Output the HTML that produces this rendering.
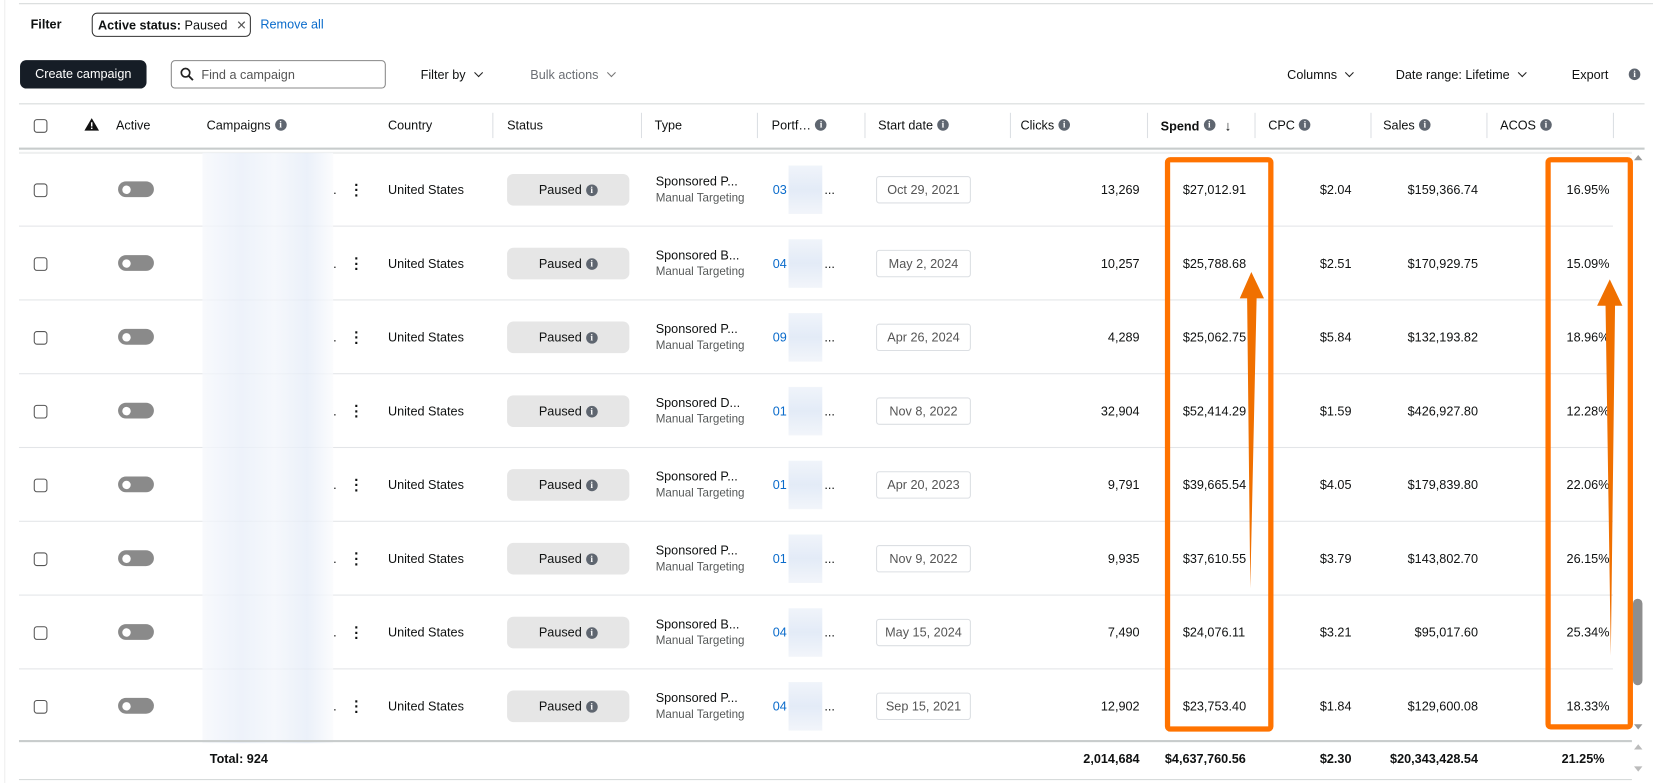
<!DOCTYPE html>
<html><head><meta charset="utf-8"><style>
*{box-sizing:border-box;margin:0;padding:0}
html,body{width:1653px;height:783px;overflow:hidden;background:#fff}
#w{position:absolute;left:0;top:0;width:1568px;height:743px;transform:scale(1.0542);transform-origin:0 0;font-family:"Liberation Sans",sans-serif;font-size:12px;color:#0f1111}
.a{position:absolute;white-space:nowrap}
.i{display:inline-block;width:11px;height:11px;border-radius:50%;background:#5f6670;color:#fff;font-size:9px;font-weight:bold;line-height:11px;text-align:center;vertical-align:top;margin-top:1px;margin-left:4px;font-family:"Liberation Serif",serif}
.cb{position:absolute;width:13px;height:13px;border:1.3px solid #555;border-radius:3px;background:#fff}
.row{position:absolute;left:18px;width:1512px;height:70px;border-bottom:1px solid #e3e5e8}
.row .a{top:28px}
.tg{position:absolute;left:94px;top:27px;width:34px;height:15px;border-radius:8px;background:#8a8a8a}
.tg:after{content:"";position:absolute;left:4px;top:3.5px;width:8px;height:8px;border-radius:50%;background:#fff}
.bl{position:absolute;left:174px;top:0;width:124px;height:70px;background:linear-gradient(90deg,#f6f8fc 0,#e9eff9 30%,#f3f6fb 55%,#e6edf8 80%,#fafbfd 100%);opacity:.8}
.bl2{position:absolute;left:730px;top:12px;width:32px;height:46px;background:linear-gradient(180deg,#f0f4fa,#e3ebf7 50%,#f2f5fa)}
.kb{position:absolute;left:318px;top:28px;width:4px;font-size:14px;font-weight:bold;line-height:5px;text-align:center}
.pill{position:absolute;left:463px;top:20px;width:116px;height:30px;border-radius:6px;background:#e6e6e6;text-align:center;line-height:30px}
.dt{position:absolute;left:813px;top:22px;width:90px;height:26px;border:1px solid #dcdfe3;border-radius:3px;text-align:center;line-height:24px;color:#555}
.ty{position:absolute;left:604px;top:20px;line-height:15px}
.ty small{font-size:11px;color:#565959}
.r{text-align:right}
.hd{position:absolute;top:112px;font-size:12px}
.dv{position:absolute;top:107px;width:1px;height:24px;background:#dcdfe3}
.ch{display:inline-block;width:6px;height:6px;border-right:1.6px solid #222;border-bottom:1.6px solid #222;transform:rotate(45deg);margin-left:9px;vertical-align:3px}
.ob{position:absolute;border:5px solid #ff7300;border-radius:5px}
</style></head><body><div id="w">
<div class="a" style="left:18px;top:3px;width:1550px;height:1px;background:#d5d9d9"></div>
<div class="a" style="left:4px;top:0;width:1px;height:743px;background:#eee"></div>
<div class="a" style="left:29px;top:16px;font-weight:bold">Filter</div>
<div class="a" style="left:87px;top:12px;width:151px;height:23px;border:1px solid #333;border-radius:5px;padding:4px 5px"><b>Active status:</b> Paused <span style="margin-left:5px;color:#555">✕</span></div>
<div class="a" style="left:247px;top:16px;color:#0a6bcb">Remove all</div>
<div class="a" style="left:19px;top:57px;width:120px;height:27px;background:#161d26;border-radius:6px;color:#fff;text-align:center;line-height:27px">Create campaign</div>
<div class="a" style="left:162px;top:57px;width:204px;height:27px;border:1px solid #888;border-radius:4px;padding:6px 0 0 28px;color:#555">Find a campaign</div>
<svg class="a" style="left:171px;top:64px" width="13" height="13"><circle cx="5" cy="5" r="4" fill="none" stroke="#222" stroke-width="1.6"/><line x1="8" y1="8" x2="12" y2="12" stroke="#222" stroke-width="1.8"/></svg>
<div class="a" style="left:399px;top:64px">Filter by<span class="ch"></span></div>
<div class="a" style="left:503px;top:64px;color:#6b6f75">Bulk actions<span class="ch" style="border-color:#777"></span></div>
<div class="a" style="left:1221px;top:64px">Columns<span class="ch"></span></div>
<div class="a" style="left:1324px;top:64px">Date range: Lifetime<span class="ch"></span></div>
<div class="a" style="left:1491px;top:64px">Export</div>
<div class="a" style="left:1541px;top:64px"><span class="i">i</span></div>
<div class="a" style="left:18px;top:98px;width:1542px;height:1px;background:#d5d9d9"></div>
<div class="cb" style="left:32px;top:113px"></div>
<svg class="a" style="left:80px;top:112px" width="14" height="12"><path d="M7 0L14 12H0Z" fill="#111"/><rect x="6.3" y="4" width="1.4" height="4" fill="#fff"/><rect x="6.3" y="9" width="1.4" height="1.4" fill="#fff"/></svg>
<div class="hd" style="left:110px">Active</div>
<div class="hd" style="left:196px">Campaigns<span class="i">i</span></div>
<div class="hd" style="left:368px">Country</div>
<div class="dv" style="left:467px"></div><div class="hd" style="left:481px">Status</div>
<div class="dv" style="left:608px"></div><div class="hd" style="left:621px">Type</div>
<div class="dv" style="left:718px"></div><div class="hd" style="left:732px">Portf…<span class="i">i</span></div>
<div class="dv" style="left:820px"></div><div class="hd" style="left:833px">Start date<span class="i">i</span></div>
<div class="dv" style="left:958px"></div><div class="hd" style="left:968px">Clicks<span class="i">i</span></div>
<div class="dv" style="left:1088px"></div><div class="hd" style="left:1101px;font-weight:bold">Spend<span class="i">i</span><span style="margin-left:9px;font-size:13px">↓</span></div>
<div class="dv" style="left:1190px"></div><div class="hd" style="left:1203px">CPC<span class="i">i</span></div>
<div class="dv" style="left:1300px"></div><div class="hd" style="left:1312px">Sales<span class="i">i</span></div>
<div class="dv" style="left:1410px"></div><div class="hd" style="left:1423px">ACOS<span class="i">i</span></div>
<div class="dv" style="left:1530px"></div>
<div class="a" style="left:18px;top:140px;width:1542px;height:1.5px;background:#c8cccc"></div>
<div class="a" style="left:18px;top:144px;width:1530px;height:2px;background:#eef0f0"></div>

<div class="row" style="top:145px"><div class="cb" style="left:14px;top:29px"></div><div class="tg"></div><div class="bl"></div><div class="a" style="left:298px">.</div><div class="kb">·<br>·<br>·</div><div class="a" style="left:350px">United States</div><div class="pill">Paused<span class="i" style="margin-top:10px">i</span></div><div class="ty">Sponsored P...<br><small>Manual Targeting</small></div><div class="a" style="left:715px;color:#0a6bcb">03</div><div class="bl2"></div><div class="a" style="left:764px">...</div><div class="dt">Oct 29, 2021</div><div class="a r" style="right:449px">13,269</div><div class="a" style="left:1104px">$27,012.91</div><div class="a r" style="right:248px">$2.04</div><div class="a r" style="right:128px">$159,366.74</div><div class="a" style="left:1468px">16.95%</div></div>
<div class="row" style="top:215px"><div class="cb" style="left:14px;top:29px"></div><div class="tg"></div><div class="bl"></div><div class="a" style="left:298px">.</div><div class="kb">·<br>·<br>·</div><div class="a" style="left:350px">United States</div><div class="pill">Paused<span class="i" style="margin-top:10px">i</span></div><div class="ty">Sponsored B...<br><small>Manual Targeting</small></div><div class="a" style="left:715px;color:#0a6bcb">04</div><div class="bl2"></div><div class="a" style="left:764px">...</div><div class="dt">May 2, 2024</div><div class="a r" style="right:449px">10,257</div><div class="a" style="left:1104px">$25,788.68</div><div class="a r" style="right:248px">$2.51</div><div class="a r" style="right:128px">$170,929.75</div><div class="a" style="left:1468px">15.09%</div></div>
<div class="row" style="top:285px"><div class="cb" style="left:14px;top:29px"></div><div class="tg"></div><div class="bl"></div><div class="a" style="left:298px">.</div><div class="kb">·<br>·<br>·</div><div class="a" style="left:350px">United States</div><div class="pill">Paused<span class="i" style="margin-top:10px">i</span></div><div class="ty">Sponsored P...<br><small>Manual Targeting</small></div><div class="a" style="left:715px;color:#0a6bcb">09</div><div class="bl2"></div><div class="a" style="left:764px">...</div><div class="dt">Apr 26, 2024</div><div class="a r" style="right:449px">4,289</div><div class="a" style="left:1104px">$25,062.75</div><div class="a r" style="right:248px">$5.84</div><div class="a r" style="right:128px">$132,193.82</div><div class="a" style="left:1468px">18.96%</div></div>
<div class="row" style="top:355px"><div class="cb" style="left:14px;top:29px"></div><div class="tg"></div><div class="bl"></div><div class="a" style="left:298px">.</div><div class="kb">·<br>·<br>·</div><div class="a" style="left:350px">United States</div><div class="pill">Paused<span class="i" style="margin-top:10px">i</span></div><div class="ty">Sponsored D...<br><small>Manual Targeting</small></div><div class="a" style="left:715px;color:#0a6bcb">01</div><div class="bl2"></div><div class="a" style="left:764px">...</div><div class="dt">Nov 8, 2022</div><div class="a r" style="right:449px">32,904</div><div class="a" style="left:1104px">$52,414.29</div><div class="a r" style="right:248px">$1.59</div><div class="a r" style="right:128px">$426,927.80</div><div class="a" style="left:1468px">12.28%</div></div>
<div class="row" style="top:425px"><div class="cb" style="left:14px;top:29px"></div><div class="tg"></div><div class="bl"></div><div class="a" style="left:298px">.</div><div class="kb">·<br>·<br>·</div><div class="a" style="left:350px">United States</div><div class="pill">Paused<span class="i" style="margin-top:10px">i</span></div><div class="ty">Sponsored P...<br><small>Manual Targeting</small></div><div class="a" style="left:715px;color:#0a6bcb">01</div><div class="bl2"></div><div class="a" style="left:764px">...</div><div class="dt">Apr 20, 2023</div><div class="a r" style="right:449px">9,791</div><div class="a" style="left:1104px">$39,665.54</div><div class="a r" style="right:248px">$4.05</div><div class="a r" style="right:128px">$179,839.80</div><div class="a" style="left:1468px">22.06%</div></div>
<div class="row" style="top:495px"><div class="cb" style="left:14px;top:29px"></div><div class="tg"></div><div class="bl"></div><div class="a" style="left:298px">.</div><div class="kb">·<br>·<br>·</div><div class="a" style="left:350px">United States</div><div class="pill">Paused<span class="i" style="margin-top:10px">i</span></div><div class="ty">Sponsored P...<br><small>Manual Targeting</small></div><div class="a" style="left:715px;color:#0a6bcb">01</div><div class="bl2"></div><div class="a" style="left:764px">...</div><div class="dt">Nov 9, 2022</div><div class="a r" style="right:449px">9,935</div><div class="a" style="left:1104px">$37,610.55</div><div class="a r" style="right:248px">$3.79</div><div class="a r" style="right:128px">$143,802.70</div><div class="a" style="left:1468px">26.15%</div></div>
<div class="row" style="top:565px"><div class="cb" style="left:14px;top:29px"></div><div class="tg"></div><div class="bl"></div><div class="a" style="left:298px">.</div><div class="kb">·<br>·<br>·</div><div class="a" style="left:350px">United States</div><div class="pill">Paused<span class="i" style="margin-top:10px">i</span></div><div class="ty">Sponsored B...<br><small>Manual Targeting</small></div><div class="a" style="left:715px;color:#0a6bcb">04</div><div class="bl2"></div><div class="a" style="left:764px">...</div><div class="dt">May 15, 2024</div><div class="a r" style="right:449px">7,490</div><div class="a" style="left:1104px">$24,076.11</div><div class="a r" style="right:248px">$3.21</div><div class="a r" style="right:128px">$95,017.60</div><div class="a" style="left:1468px">25.34%</div></div>
<div class="row" style="top:635px;border-bottom:none"><div class="cb" style="left:14px;top:29px"></div><div class="tg"></div><div class="bl"></div><div class="a" style="left:298px">.</div><div class="kb">·<br>·<br>·</div><div class="a" style="left:350px">United States</div><div class="pill">Paused<span class="i" style="margin-top:10px">i</span></div><div class="ty">Sponsored P...<br><small>Manual Targeting</small></div><div class="a" style="left:715px;color:#0a6bcb">04</div><div class="bl2"></div><div class="a" style="left:764px">...</div><div class="dt">Sep 15, 2021</div><div class="a r" style="right:449px">12,902</div><div class="a" style="left:1104px">$23,753.40</div><div class="a r" style="right:248px">$1.84</div><div class="a r" style="right:128px">$129,600.08</div><div class="a" style="left:1468px">18.33%</div></div>

<div class="a" style="left:18px;top:702px;width:1530px;height:1.5px;background:#c8cccc"></div>
<div class="a" style="left:18px;top:739px;width:1530px;height:1px;background:#d5d9d9"></div>
<div style="font-weight:bold">
<div class="a" style="left:199px;top:713px">Total: 924</div>
<div class="a" style="left:1000px;top:713px;width:81px;text-align:right">2,014,684</div>
<div class="a" style="left:1105px;top:713px">$4,637,760.56</div>
<div class="a" style="left:1200px;top:713px;width:82px;text-align:right">$2.30</div>
<div class="a" style="left:1300px;top:713px;width:102px;text-align:right">$20,343,428.54</div>
<div class="a" style="left:1440px;top:713px;width:82px;text-align:right">21.25%</div>
</div>
<svg class="a" style="left:1547px;top:145px" width="14" height="598">
<path d="M3 7L7 2L11 7Z" fill="#999"/><rect x="2" y="423" width="9" height="82" rx="4.5" fill="#8e8e8e"/><path d="M3 542L7 547L11 542Z" fill="#999"/>
<path d="M3 566L7 561L11 566Z" fill="#bbb"/><path d="M3 582L7 587L11 582Z" fill="#bbb"/></svg>
<div class="ob" style="left:1105px;top:149px;width:103px;height:545px"></div>
<div class="ob" style="left:1466px;top:149px;width:83px;height:543px"></div>
<svg class="a" style="left:0;top:0" width="1568" height="743">
<path d="M1186 558L1183 283L1176 283L1187 258L1199 283L1192 283Z" fill="#f07000"/>
<path d="M1528 622L1523 290L1515 290L1527 265L1539 290L1532 290Z" fill="#f07000"/>
</svg>
</div></body></html>
